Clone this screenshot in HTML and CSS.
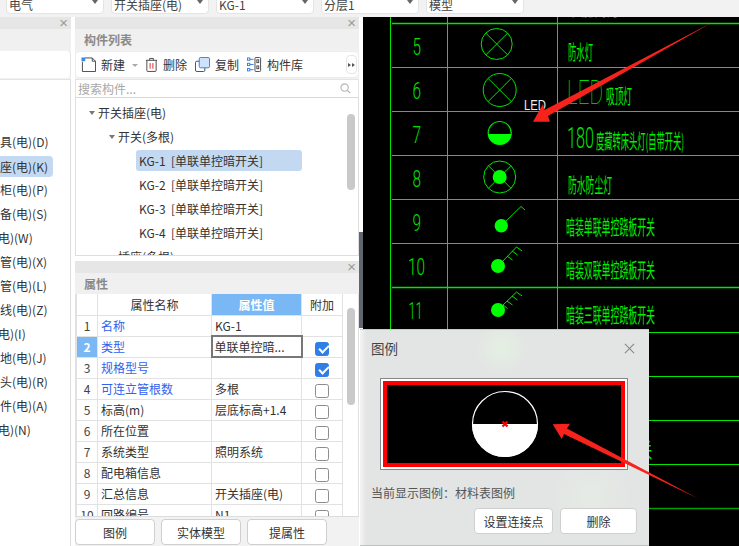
FILE: index.html
```html
<!DOCTYPE html>
<html lang="zh-CN">
<head>
<meta charset="utf-8">
<title>图例</title>
<link rel="stylesheet" href="styles.css">
</head>
<body>
<div class="app">
  <div class="topbar">
    <div class="select">电气<i class="caret"></i></div>
    <div class="select">开关插座(电)<i class="caret"></i></div>
    <div class="select">KG-1<i class="caret"></i></div>
    <div class="select">分层1<i class="caret"></i></div>
    <div class="select">模型<i class="caret"></i></div>
  </div>
  <div class="main">
    <section class="panel-left">
      <div class="dock-head"><span class="x">×</span></div>
      <div class="title-strip"></div>
      <div class="left-tools"></div>
      <ul class="left-list">
        <li>具(电)(D)</li>
        <li class="on">座(电)(K)</li>
        <li>柜(电)(P)</li>
        <li>备(电)(S)</li>
        <li class="clip">电)(W)</li>
        <li>管(电)(X)</li>
        <li>管(电)(L)</li>
        <li>线(电)(Z)</li>
        <li class="clip">电)(I)</li>
        <li>地(电)(J)</li>
        <li>头(电)(R)</li>
        <li>件(电)(A)</li>
        <li class="clip">电)(N)</li>
      </ul>
    </section>

    <div class="panel-mid">
      <section class="list-panel">
        <div class="dock-head"><span class="x">×</span></div>
        <div class="title-strip">构件列表</div>
        <div class="tools">
          <svg class="ico" viewBox="0 0 16 16"><path d="M1.5 5V15.500H15.500V4.500L12 1H4" fill="#fff" stroke="#444"/><path d="M12 1V4.500H15.500" fill="none" stroke="#444"/><rect x="0.500" y="0.500" width="4" height="4" fill="#3d8be8"/></svg>
          <span class="tool-label">新建</span><i class="caret small"></i>
          <svg class="ico del" viewBox="0 0 14 16"><path d="M1 3.500H13M5 3.500V1.500H9V3.500M2 3.500V14.500Q2 15.500 3 15.500H11Q12 15.500 12 14.500V3.500" fill="none" stroke="#444"/><path d="M5.500 6.500V12.500M8.500 6.500V12.500" stroke="#e02020"/></svg>
          <span class="tool-label">删除</span>
          <svg class="ico copy" viewBox="0 0 16 16"><rect x="0.500" y="4.500" width="10" height="11" rx="1.500" fill="#fff" stroke="#444"/><rect x="4.500" y="0.500" width="11" height="11" rx="1.500" fill="#cfe2fb" stroke="#2f7de0"/></svg>
          <span class="tool-label">复制</span>
          <svg class="ico lib" viewBox="0 0 16 16"><path d="M3 2.500H7M3 8H7M3 13.500H7" stroke="#2f7de0"/><rect x="0.500" y="1" width="2.500" height="2.500" fill="#fff" stroke="#2f7de0"/><rect x="0.500" y="6.700" width="2.500" height="2.500" fill="#fff" stroke="#2f7de0"/><rect x="0.500" y="12.300" width="2.500" height="2.500" fill="#fff" stroke="#2f7de0"/><rect x="8.500" y="0.500" width="6" height="15" rx="1" fill="#fff" stroke="#444"/><rect x="10.500" y="3" width="2" height="3" fill="none" stroke="#444"/><rect x="10.500" y="9.500" width="2" height="3" fill="none" stroke="#444"/></svg>
          <span class="tool-label">构件库</span>
          <span class="more"><i></i><i></i></span>
        </div>
        <div class="search">
          <span>搜索构件...</span>
          <svg class="mag" viewBox="0 0 12 12"><circle cx="5" cy="5" r="4" fill="none" stroke="#b5b5b5" stroke-width="1.200"/><path d="M8 8L11 11" stroke="#b5b5b5" stroke-width="1.400"/></svg>
        </div>
        <div class="tree">
          <div class="node lv1"><i class="tri"></i>开关插座(电)</div>
          <div class="node lv2"><i class="tri"></i>开关(多根)</div>
          <div class="node lv3 sel">KG-1&nbsp;&nbsp;[单联单控暗开关]</div>
          <div class="node lv3">KG-2&nbsp;&nbsp;[单联单控暗开关]</div>
          <div class="node lv3">KG-3&nbsp;&nbsp;[单联单控暗开关]</div>
          <div class="node lv3">KG-4&nbsp;&nbsp;[单联单控暗开关]</div>
          <div class="node lv2"><i class="tri"></i>插座(多根)</div>
          <div class="thumb tree-thumb"></div>
        </div>
      </section>

      <section class="prop-panel">
        <div class="dock-head"><span class="x">×</span></div>
        <div class="title-strip">属性</div>
        <div class="table-wrap">
          <table class="props">
            <colgroup><col class="c1"><col class="c2"><col class="c3"><col class="c4"></colgroup>
            <thead><tr><th></th><th>属性名称</th><th class="hl">属性值</th><th>附加</th></tr></thead>
            <tbody>
              <tr><td class="n">1</td><td class="link">名称</td><td>KG-1</td><td></td></tr>
              <tr><td class="n hl">2</td><td class="link">类型</td><td class="cur">单联单控暗...</td><td><span class="cb on"></span></td></tr>
              <tr><td class="n">3</td><td class="link">规格型号</td><td></td><td><span class="cb on"></span></td></tr>
              <tr><td class="n">4</td><td class="link">可连立管根数</td><td>多根</td><td><span class="cb"></span></td></tr>
              <tr><td class="n">5</td><td>标高(m)</td><td>层底标高+1.4</td><td><span class="cb"></span></td></tr>
              <tr><td class="n">6</td><td>所在位置</td><td></td><td><span class="cb"></span></td></tr>
              <tr><td class="n">7</td><td>系统类型</td><td>照明系统</td><td><span class="cb"></span></td></tr>
              <tr><td class="n">8</td><td>配电箱信息</td><td></td><td><span class="cb"></span></td></tr>
              <tr><td class="n">9</td><td>汇总信息</td><td>开关插座(电)</td><td><span class="cb"></span></td></tr>
              <tr><td class="n">10</td><td>回路编号</td><td>N1</td><td><span class="cb"></span></td></tr>
            </tbody>
          </table>
          <div class="thumb prop-thumb"></div>
        </div>
        <div class="bottom-btns">
          <button class="btn">图例</button>
          <button class="btn">实体模型</button>
          <button class="btn">提属性</button>
        </div>
      </section>
    </div>

    <div class="strip"><div class="strip-dark"></div></div>

    <div class="canvas">
      <svg class="cad" viewBox="363 17 376 529" width="376" height="529">
        <g stroke="#00e600" stroke-width="1" fill="none">
          <path d="M390.500 17V546M447.500 17V546M557.500 17V546"/>
          <path d="M392 23.500H739" stroke-width="1.500"/>
          <path d="M392 67.500H739M392 111.500H739M392 155.500H739M392 199.500H739M392 243.500H739"/>
          <path d="M392 287.500H739" stroke-width="1.500"/>
          <path d="M392 332.500H739M392 376.500H739M392 420.500H739"/>
          <path d="M392 464.500H739"/>
          <path d="M392 508.500H739" stroke="#00a000" stroke-width="1.500"/>
          <circle cx="496.700" cy="44" r="15.500"/>
          <path d="M485.700 33L507.700 55M507.700 33L485.700 55"/>
          <circle cx="499.700" cy="90" r="16.500"/>
          <path d="M488 78.300L511.400 101.700M511.400 78.300L488 101.700"/>
          <circle cx="499.700" cy="133" r="11.500" stroke-width="1.200"/>
          <circle cx="499.700" cy="177" r="16"/>
          <path d="M488.400 165.700L511 188.300M511 165.700L488.400 188.300"/>
          <path d="M503 224L521 206.500L525 210"/>
          <path d="M501 263L516.500 247L522 251M512 251L517.500 255M507 256L512.500 260"/>
          <path d="M501 307L516.500 292L522 296M512 296L517.500 300M507 301L512.500 305M503 305L507.500 308.500"/>
        </g>
        <path d="M488 134H511.500A11.800 11.800 0 0 1 488 134Z" fill="#00ff00"/>
        <circle cx="499.700" cy="177" r="7" fill="#00ff00"/>
        <circle cx="501.300" cy="225.700" r="6.700" fill="#00ff00"/>
        <circle cx="498" cy="266" r="7" fill="#00ff00"/>
        <circle cx="498" cy="310" r="7" fill="#00ff00"/>

        <g class="cad-num">
          <text x="412.500" y="55" textLength="8.500" lengthAdjust="spacingAndGlyphs">5</text>
          <text x="412.500" y="99" textLength="8.500" lengthAdjust="spacingAndGlyphs">6</text>
          <text x="412.500" y="143" textLength="8.500" lengthAdjust="spacingAndGlyphs">7</text>
          <text x="412.500" y="187" textLength="8.500" lengthAdjust="spacingAndGlyphs">8</text>
          <text x="412.500" y="231" textLength="8.500" lengthAdjust="spacingAndGlyphs">9</text>
          <text x="408" y="275" textLength="17" lengthAdjust="spacingAndGlyphs">10</text>
          <text x="408.500" y="319" textLength="14" lengthAdjust="spacingAndGlyphs">11</text>
        </g>
        <text class="cad-big led" x="567" y="104" textLength="36" lengthAdjust="spacingAndGlyphs">LED</text>
        <text class="cad-big" x="567" y="148" textLength="27" lengthAdjust="spacingAndGlyphs">180</text>
        <g class="cad-cn">
          <text x="568" y="16" textLength="52" lengthAdjust="spacingAndGlyphs">节能筒灯</text>
          <text x="568" y="60" textLength="25" lengthAdjust="spacingAndGlyphs">防水灯</text>
          <text x="606" y="104" textLength="26" lengthAdjust="spacingAndGlyphs">吸顶灯</text>
          <text x="596" y="149" textLength="88" lengthAdjust="spacingAndGlyphs">度藏转床头灯(自带开关)</text>
          <text x="568" y="193" textLength="44" lengthAdjust="spacingAndGlyphs">防水防尘灯</text>
          <text x="566" y="235" textLength="89" lengthAdjust="spacingAndGlyphs">暗装单联单控跷板开关</text>
          <text x="566" y="278" textLength="89" lengthAdjust="spacingAndGlyphs">暗装双联单控跷板开关</text>
          <text x="566" y="323" textLength="89" lengthAdjust="spacingAndGlyphs">暗装三联单控跷板开关</text>
          <text x="566" y="458" textLength="86" lengthAdjust="spacingAndGlyphs">暗装单联单控开关</text>
        </g>
        <text class="cad-led" x="524" y="110" textLength="22" lengthAdjust="spacingAndGlyphs">LED</text>
        <polygon points="713,22 548,116 550,121.700 533,121.700 543,104 544.500,110" fill="#f5231c"/>
      </svg>
    </div>
  </div>

  <aside class="dialog">
    <header class="dlg-head"><span>图例</span>
      <svg class="dlg-x" viewBox="0 0 12 12"><path d="M1 1L11 11M11 1L1 11" stroke="#888" stroke-width="1.200"/></svg>
    </header>
    <div class="preview">
      <div class="preview-red">
        <svg class="legend" viewBox="0 0 70 70" width="70" height="70">
          <circle cx="35" cy="35" r="32.500" fill="none" stroke="#fff" stroke-width="1.200"/>
          <path d="M2 35H68A33 33 0 0 1 2 35Z" fill="#fff"/>
          <path d="M32.500 32.500L37.500 37.500M37.500 32.500L32.500 37.500" stroke="#f00" stroke-width="2.200"/>
        </svg>
      </div>
    </div>
    <p class="caption">当前显示图例：材料表图例</p>
    <div class="dlg-btns">
      <button class="btn dlg-btn1">设置连接点</button>
      <button class="btn dlg-btn2">删除</button>
    </div>
  </aside>

  <svg class="overlay" viewBox="0 0 739 546" width="739" height="546">
    <polygon points="552.700,424.300 570,423.700 567,428.500 698,498.500 564,434 561.700,439" fill="#f5231c"/>
  </svg>
</div>
</body>
</html>
```
FILE: styles.css
```css
* { box-sizing: border-box; }
html, body { margin: 0; padding: 0; }
body {
  width: 739px;
  height: 546px;
  overflow: hidden;
  background: #fff;
  font-family: "Noto Sans CJK SC", "Liberation Sans", sans-serif;
  font-size: 12px;
  color: #333;
}
.app { position: relative; width: 739px; height: 546px; overflow: hidden; }

/* top toolbar */
.topbar {
  height: 17px;
  background: #f2f2f2;
  display: flex;
  align-items: flex-end;
  gap: 7px;
  padding: 0 0 3px 6px;
  overflow: hidden;
}
.select {
  flex: none;
  position: relative;
  width: 98px;
  height: 24px;
  padding: 5px 0 0 2px;
  background: #fff;
  border: 1px solid #e4e4e4;
  border-radius: 4px;
  font-size: 12px;
  line-height: 17px;
  color: #444;
}
.caret {
  display: block;
  width: 0;
  height: 0;
  border: 3.500px solid transparent;
  border-top: 4px solid #666;
  border-bottom: 0;
}
.select .caret { position: absolute; right: 5px; bottom: 9px; }
.caret.small { border-top-color: #aaa; margin: 2px 7px 0 7px; border-width: 3px; border-bottom: 0; }

.main { display: flex; height: 529px; }

/* shared panel bits */
.dock-head {
  height: 12px;
  background: #e6e6e6;
  position: relative;
  overflow: hidden;
}
.x {
  position: absolute;
  right: 3px;
  top: -1px;
  font: 15px/14px "Liberation Sans", sans-serif;
  color: #9a9a9a;
}
.title-strip {
  height: 21px;
  background: #f0f0f0;
  padding-left: 9px;
  font-size: 12px;
  font-weight: 700;
  line-height: 21px;
  color: #8a8a8a;
}

/* left panel */
.panel-left {
  width: 71px;
  margin-right: 4px;
  flex: none;
  display: flex;
  flex-direction: column;
  background: #f2f2f2;
}
.left-tools { height: 27px; margin-top: 1px; background: #fff; border-radius: 0 4px 4px 0; border-right: 1px solid #e4e4e4; }
.left-list {
  flex: 1;
  list-style: none;
  margin: 1px 0 0;
  padding: 50px 0 0;
  background: #fff;
  border-right: 1px solid #dcdcdc;
  border-top: 1px solid #e4e4e4;
  font-size: 12px;
  overflow: hidden;
}
.left-list li {
  height: 24px;
  line-height: 24px;
  white-space: nowrap;
  width: 53px;
  padding-left: 0;
  position: relative;
}
.left-list li.on { background: #c3d9f2; border-radius: 0 4px 4px 0; height: 21px; line-height: 21px; margin-top: 2px; margin-bottom: 1px; }
.left-list li.clip { text-indent: -2px; }

/* middle column */
.panel-mid { width: 284px; flex: none; display: flex; flex-direction: column; gap: 5px; }
.list-panel { height: 239px; background: #f2f2f2; display: flex; flex-direction: column; }
.tools {
  height: 27px;
  margin-top: 1px;
  background: #fff;
  border: 1px solid #ececec;
  border-radius: 4px;
  display: flex;
  align-items: center;
  position: relative;
  padding-left: 5px;
}
.ico { width: 15px; height: 15px; flex: none; }
.tool-label { font-size: 12px; color: #333; margin-left: 5px; white-space: nowrap; }
.ico.del { width: 13px; }
.ico.copy { margin-left: 8px; }
.ico.lib { margin-left: 8px; }
.more {
  position: absolute;
  right: 1px;
  top: 3px;
  width: 11px;
  height: 19px;
  border: 1px solid #e6e6e6;
  border-radius: 4px;
  background: #fff;
  display: flex;
  align-items: center;
  justify-content: center;
}
.more i {
  width: 0;
  height: 0;
  border-left: 3px solid #555;
  border-top: 2.500px solid transparent;
  border-bottom: 2.500px solid transparent;
  margin-right: 1px;
}
.search {
  height: 19px;
  margin-top: 1px;
  background: #fff;
  border: 1px solid #e4e4e4;
  border-bottom: 1px solid #d8d8d8;
  padding-left: 2px;
  display: flex;
  align-items: center;
  justify-content: space-between;
  font-size: 12px;
  color: #a8a8a8;
}
.mag { width: 11px; height: 11px; margin-right: 7px; }
.tree {
  flex: 1;
  position: relative;
  overflow: hidden;
  background: #fff;
  border: 1px solid #dedede;
  border-top: 0;
  padding-top: 3px;
  font-size: 12px;
}
.node { height: 24px; line-height: 24px; white-space: nowrap; color: #333; display: flex; align-items: center; }
.lv1 { padding-left: 13px; }
.lv2 { padding-left: 33px; }
.lv3 { margin-left: 60px; padding-left: 3px; width: 166px; }
.sel { background: #c3d9f2; border-radius: 3px; height: 21px; margin-top: 1px; margin-bottom: 2px; }
.tri {
  width: 0;
  height: 0;
  border-left: 3.500px solid transparent;
  border-right: 3.500px solid transparent;
  border-top: 4px solid #777;
  margin-right: 3px;
}
.thumb { position: absolute; background: #c9c9c9; border-radius: 4px; width: 8px; }
.tree-thumb { right: 3px; top: 16px; height: 76px; }

.prop-panel { flex: 1; display: flex; flex-direction: column; background: #f2f2f2; }
.table-wrap {
  height: 223px;
  position: relative;
  overflow: hidden;
  background: #fff;
  border-left: 1px solid #e0e0e0;
  border-right: 1px solid #e0e0e0;
  border-bottom: 1px solid #dcdcdc;
}
.props { border-collapse: collapse; table-layout: fixed; width: 266px; font-size: 12px; }
.c1 { width: 21px; }
.c2 { width: 114px; }
.c3 { width: 90px; }
.c4 { width: 41px; }
.props th, .props td {
  height: 21px;
  padding: 0 0 0 3px;
  border: 1px solid #e2e2e2;
  font-weight: 400;
  color: #333;
  white-space: nowrap;
  overflow: hidden;
  line-height: 19px;
}
.props th { text-align: center; padding: 0; border-top: 0; }
.props th.hl { background: #7ab8f5; color: #fff; font-weight: 700; }
.props td.n { text-align: center; padding: 0; color: #444; }
.props td.n.hl { background: #7ab8f5; color: #fff; font-weight: 700; }
.props td.link { color: #2f62f0; }
.props td.cur { border: 2px solid #777; padding-left: 2px; }
.props td:last-child { text-align: center; padding: 0; }
.cb {
  display: inline-block;
  width: 14px;
  height: 14px;
  vertical-align: middle;
  background: #fff;
  border: 1px solid #8c8c8c;
  border-radius: 2.500px;
  position: relative;
}
.cb.on { background: #2f7fe6; border-color: #2f7fe6; }
.cb.on::after {
  content: "";
  position: absolute;
  left: 2.500px;
  top: 2px;
  width: 8px;
  height: 4px;
  border-left: 2px solid #fff;
  border-bottom: 2px solid #fff;
  transform: rotate(-45deg);
}
.prop-thumb { right: 3px; top: 14px; height: 97px; }
.bottom-btns { display: flex; gap: 6px; padding-top: 2px; }
.btn {
  width: 80px;
  height: 26px;
  padding: 0;
  background: #fff;
  border: 1px solid #cfcfcf;
  border-radius: 4px;
  font: 12px "Noto Sans CJK SC", sans-serif;
  color: #333;
}

/* splitter */
.strip { width: 4px; flex: none; background: #fff; position: relative; }
.strip-dark { margin-top: 215px; height: 96px; background: #5f6670; }

/* drawing */
.canvas { flex: 1; background: #000; overflow: hidden; }
.cad { display: block; }
.cad-num text { fill: #00e000; font: 300 23px Roboto, "Liberation Sans", sans-serif; }
.cad-big { fill: #00e000; font: 300 30px Roboto, "Liberation Sans", sans-serif; }
.cad-big.led { font-size: 33px; font-weight: 100; }
.cad-cn text { fill: #00f000; font: 400 20px "Noto Sans CJK SC", sans-serif; }
.cad-led { fill: #eee; font: 14px "Liberation Sans", sans-serif; }

/* dialog */
.dialog {
  position: absolute;
  left: 360px;
  top: 329px;
  width: 289px;
  height: 217px;
  padding: 0 11px;
  border-top: 1px solid #c9cbca;
  border-bottom: 1px solid #bfc1c0;
  background:
    linear-gradient(90deg, #f4f4f4 0, rgba(244,244,244,0) 6px),
    radial-gradient(circle at 142px 18px, #e4f0e2 0, rgba(228,240,226,0) 26px),
    radial-gradient(circle at 230px 165px, #e5ebe4 0, rgba(229,235,228,0) 40px),
    #e3e5e4;
}
.dlg-head {
  height: 36px;
  display: flex;
  align-items: center;
  justify-content: space-between;
  font-size: 13.500px;
  color: #444;
  padding-right: 2px;
}
.dlg-x { width: 11px; height: 11px; margin-right: 1px; }
.preview {
  width: 248px;
  height: 92px;
  margin: 12px 0 0 9px;
  padding: 2px;
  background: #fff;
  border: 1px solid #85888c;
}
.preview-red {
  height: 86px;
  background: #000;
  border: 4px solid #f00;
  display: flex;
  align-items: center;
  justify-content: center;
}
.legend { display: block; flex: none; margin-left: 2px; }
.caption { margin: 14px 0 0; height: 18px; line-height: 18px; font-size: 12px; color: #555; white-space: nowrap; }
.dlg-btns { display: flex; gap: 7px; margin: 6px 0 0 103px; }
.dlg-btn1 { width: 79px; }
.dlg-btn2 { width: 77px; }

.overlay { position: absolute; left: 0; top: 0; pointer-events: none; }
```
